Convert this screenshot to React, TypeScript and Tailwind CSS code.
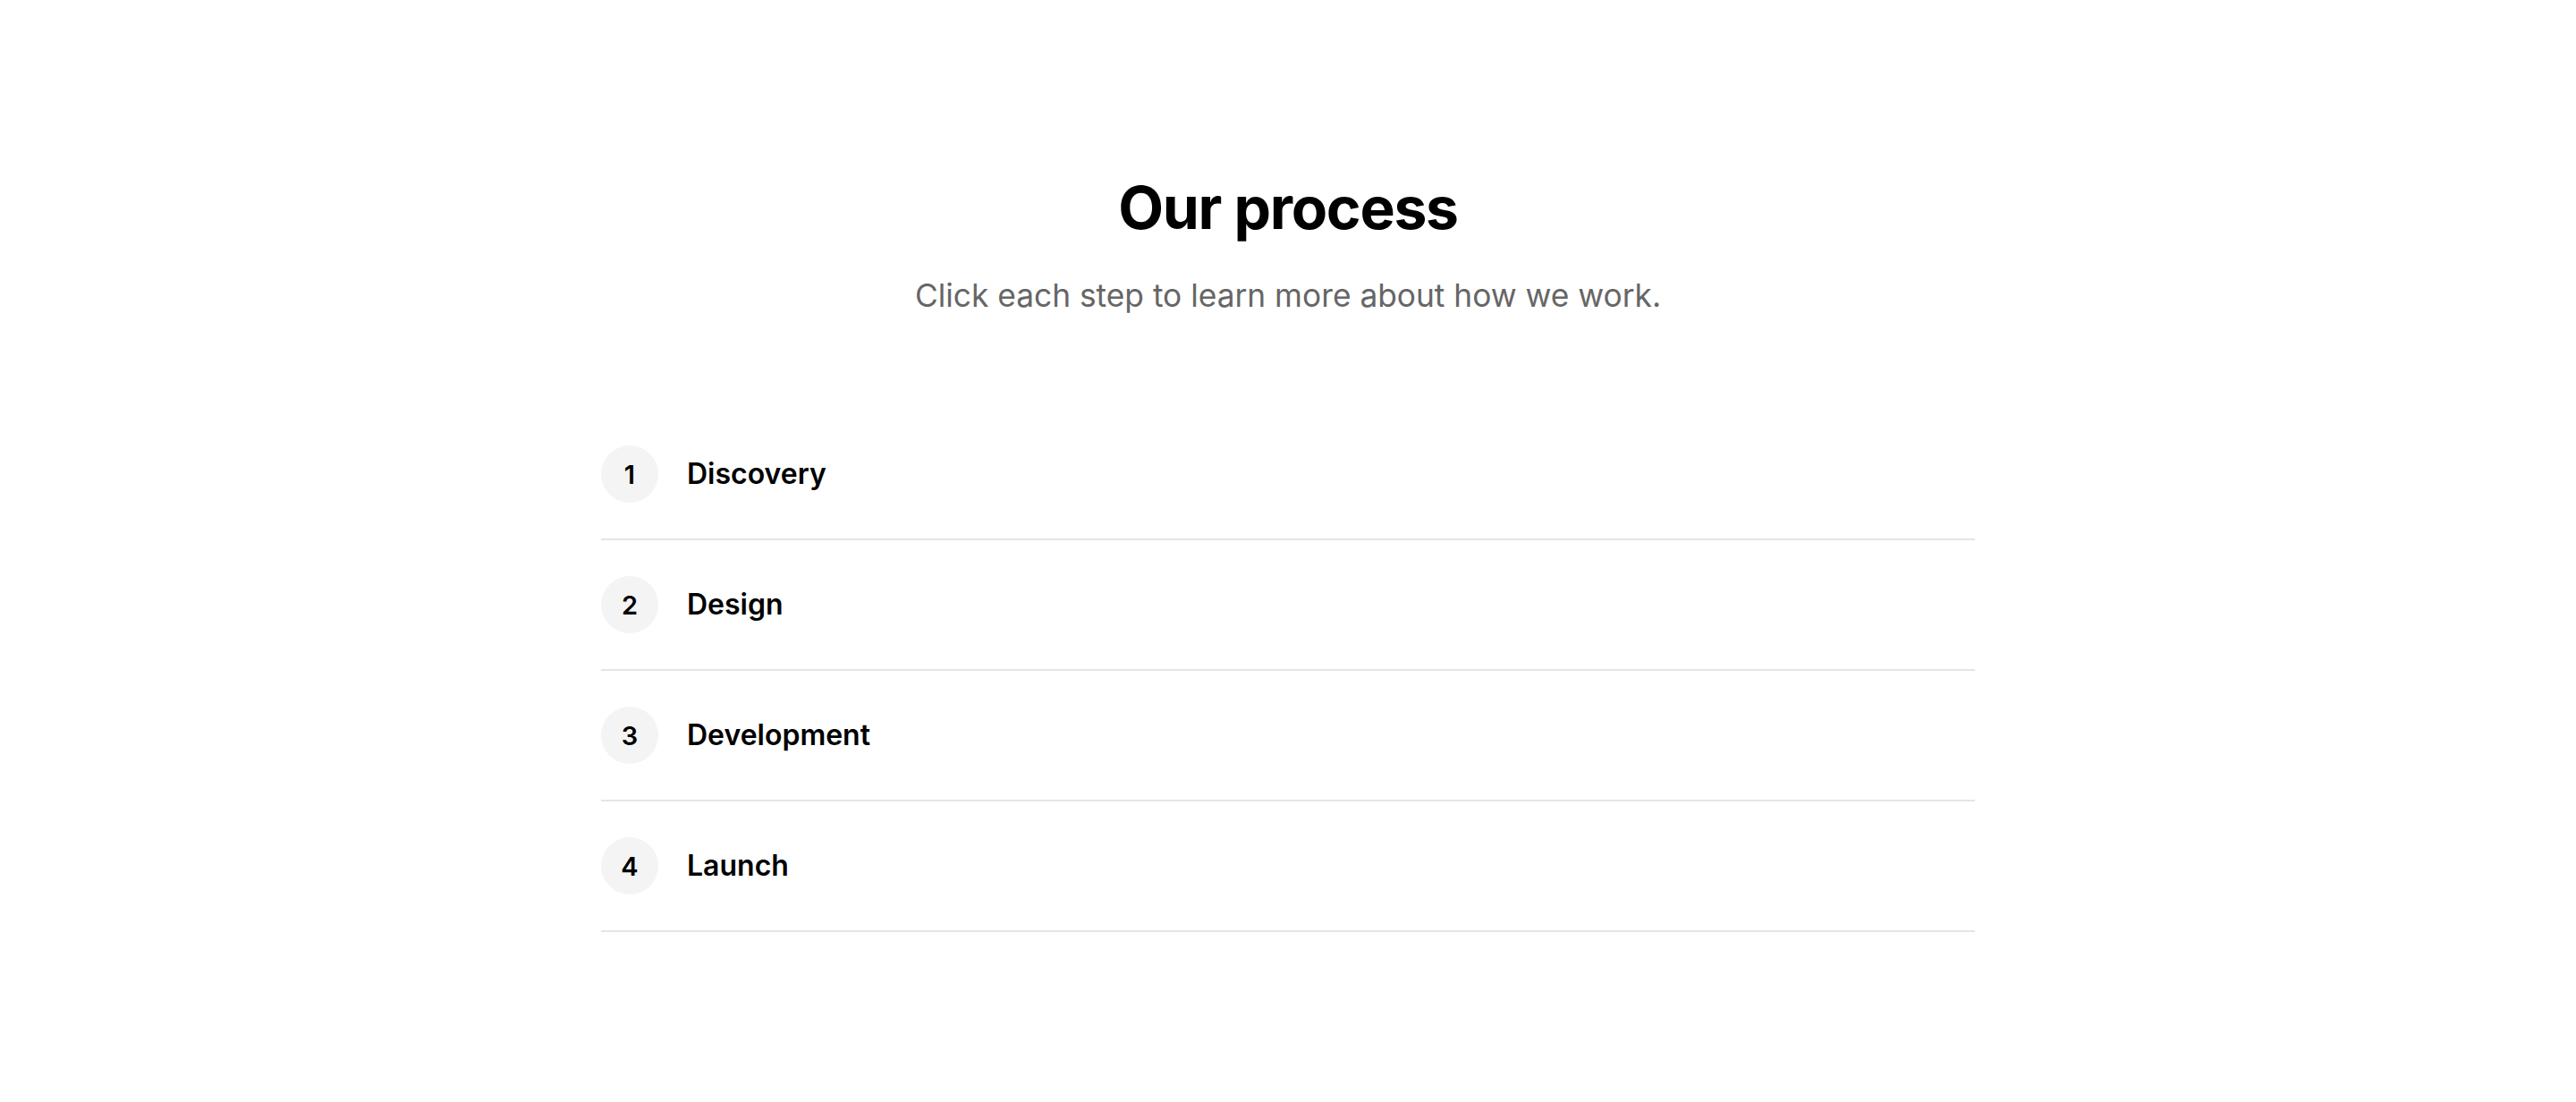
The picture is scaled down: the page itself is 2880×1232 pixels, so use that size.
import React from "react";

const steps = ["Discovery", "Design", "Development", "Launch"];

export default function App() {
  return (
    <div
      className="min-h-[1232px] w-full bg-white text-black"
      style={{ fontFamily: "Inter, 'Noto Sans', sans-serif" }}
    >
      <div className="mx-auto w-[1536px] pt-[192px]">
        <h1 className="text-center text-[66px] leading-[80px] font-bold tracking-[-0.02em] text-black">
          Our process
        </h1>
        <p className="mt-[31px] text-center text-[35.3px] leading-[56px] text-[#666666]">
          Click each step to learn more about how we work.
        </p>
        <div className="mt-[99px] flex flex-col">
          {steps.map((s, i) => (
            <button
              key={s}
              className="flex w-full items-center gap-[32px] border-b-2 border-[#e5e5e5] py-[40px] text-left"
            >
              <span className="flex h-[64px] w-[64px] shrink-0 items-center justify-center rounded-full bg-[#f4f4f4] text-[29px] leading-none font-semibold text-black">
                {i + 1}
              </span>
              <span className="text-[32px] leading-[48px] font-semibold text-black">
                {s}
              </span>
            </button>
          ))}
        </div>
      </div>
    </div>
  );
}
